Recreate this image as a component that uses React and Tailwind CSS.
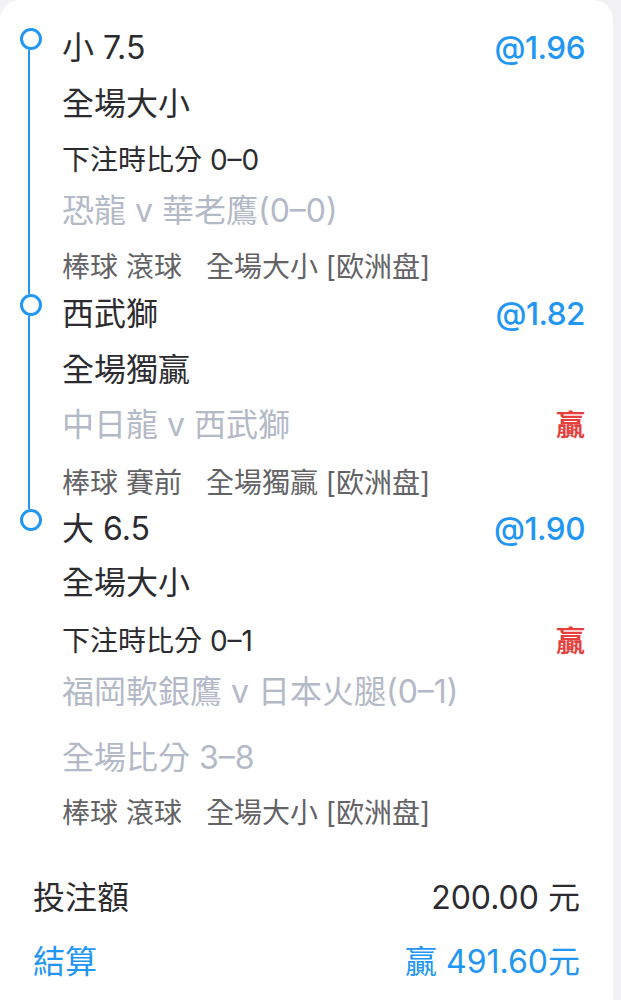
import React from 'react'

const FONT = { fontFamily: 'Inter, "Noto Sans CJK TC", sans-serif' }

function Row({ size = 'big', tone = 'dark', mt = 0, right, children }) {
  const sizeCls = size === 'big' ? 'h-[40px] text-[32px]' : 'h-[34px] text-[28px]'
  const toneCls = tone === 'light' ? 'text-[#b4b9c7]' : tone === 'meta' ? 'text-[#636366]' : 'text-[#2c2c30]'
  return (
    <div className={`flex items-center justify-between whitespace-nowrap ${sizeCls}`} style={{ marginTop: mt }}>
      <span className={`${toneCls} leading-none`}>{children}</span>
      {right}
    </div>
  )
}

const Odds = ({ v }) => <span className="text-[31.5px] leading-none font-medium text-[#2196f3] tracking-[-0.5px]">{v}</span>
const Win = () => <span className="text-[29px] leading-none font-bold text-[#e53f3c]">贏</span>

function Meta({ a, b, mt }) {
  return (
    <Row size="small" tone="meta" mt={mt}>
      {a}<span className="ml-[24px]">{b}</span>
    </Row>
  )
}

function Leg({ last, pb = 0, children }) {
  return (
    <div className="flex">
      <div className="w-[62px] shrink-0 flex flex-col pl-[20px]">
        <div className="w-[22px] h-[22px] rounded-full border-[3px] border-[#2196f3] bg-white shrink-0" />
        {!last && <div className="ml-[8px] w-[2px] flex-1 bg-[#2196f3]" />}
      </div>
      <div className="flex-1 pr-[28px]" style={{ paddingBottom: pb }}>{children}</div>
    </div>
  )
}

export default function App() {
  return (
    <div className="min-h-screen bg-[#f2f2f6]" style={FONT}>
      <div className="w-[613px] min-h-[1000px] bg-white rounded-t-[20px] pt-[28px]">
        <Leg pb={10}>
          <Row right={<Odds v="@1.96" />}>小 7.5</Row>
          <Row mt={16}>全場大小</Row>
          <Row size="small" mt={19}>下注時比分 0–0</Row>
          <Row tone="light" mt={14}>恐龍 v 華老鷹(0–0)</Row>
          <Meta a="棒球 滾球" b="全場大小 [欧洲盘]" mt={19} />
        </Leg>
        <Leg pb={9}>
          <Row right={<Odds v="@1.82" />}>西武獅</Row>
          <Row mt={16}>全場獨贏</Row>
          <Row tone="light" mt={15} right={<Win />}>中日龍 v 西武獅</Row>
          <Meta a="棒球 賽前" b="全場獨贏 [欧洲盘]" mt={21} />
        </Leg>
        <Leg last>
          <Row right={<Odds v="@1.90" />}>大 6.5</Row>
          <Row mt={14}>全場大小</Row>
          <Row size="small" mt={21} right={<Win />}>下注時比分 0–1</Row>
          <Row tone="light" mt={14}>福岡軟銀鷹 v 日本火腿(0–1)</Row>
          <Row tone="light" mt={26}>全場比分 3–8</Row>
          <Meta a="棒球 滾球" b="全場大小 [欧洲盘]" mt={18} />
        </Leg>

        <div className="px-[33px] mt-[46px]">
          <div className="h-[44px] flex items-center justify-between text-[32px] text-[#2c2c30] leading-none">
            <span>投注額</span>
            <span>200.00 元</span>
          </div>
          <div className="mt-[20px] h-[44px] flex items-center justify-between text-[32px] text-[#2196f3] leading-none">
            <span>結算</span>
            <span>贏 491.60元</span>
          </div>
        </div>
      </div>
    </div>
  )
}
